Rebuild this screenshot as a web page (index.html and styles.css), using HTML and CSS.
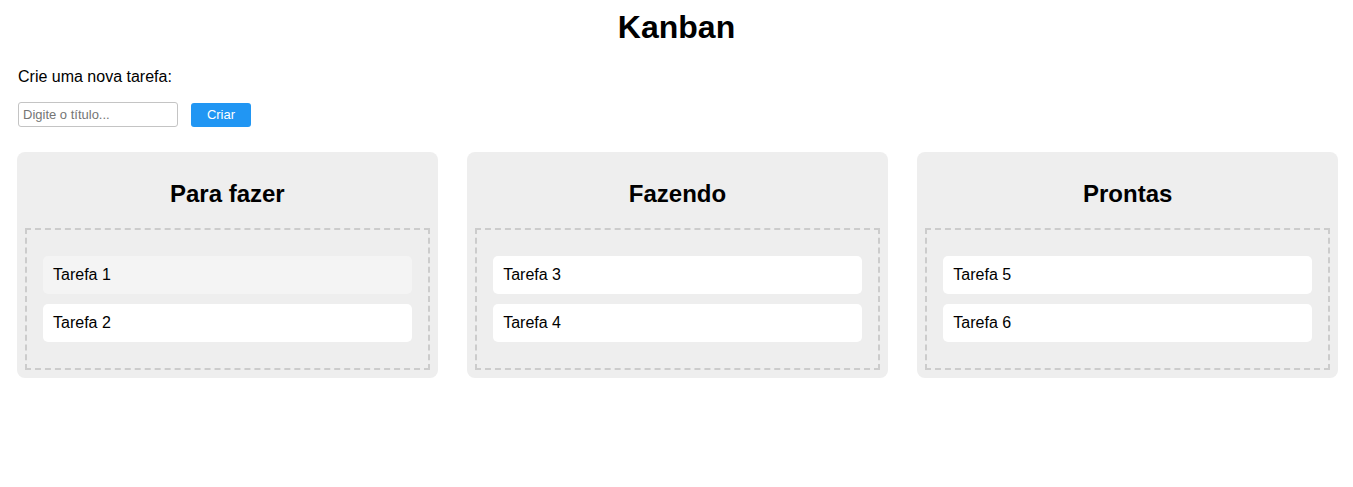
FILE: index.html
```html
<!DOCTYPE html>
<html lang="pt-BR">
<head>
<meta charset="utf-8">
<title>Kanban</title>
<link rel="stylesheet" href="styles.css">
</head>
<body>
<h1 class="title">Kanban</h1>
<p class="label">Crie uma nova tarefa:</p>
<form class="new-task">
  <input class="new-task-input" type="text" placeholder="Digite o título...">
  <button class="new-task-btn" type="button">Criar</button>
</form>
<div class="board">
  <section class="column">
    <h2 class="column-title">Para fazer</h2>
    <div class="dropzone">
      <div class="card card-hover">Tarefa 1</div>
      <div class="card">Tarefa 2</div>
    </div>
  </section>
  <section class="column">
    <h2 class="column-title">Fazendo</h2>
    <div class="dropzone">
      <div class="card">Tarefa 3</div>
      <div class="card">Tarefa 4</div>
    </div>
  </section>
  <section class="column">
    <h2 class="column-title">Prontas</h2>
    <div class="dropzone">
      <div class="card">Tarefa 5</div>
      <div class="card">Tarefa 6</div>
    </div>
  </section>
</div>
</body>
</html>
```

FILE: styles.css
```css
html, body {
  margin: 0;
  padding: 0;
  background: #fff;
}
body {
  font-family: "Liberation Sans", Arial, sans-serif;
  color: #000;
  padding: 9px 18px;
}
.title {
  font-size: 32px;
  font-weight: bold;
  text-align: center;
  margin: 0 0 22px;
  line-height: 37px;
}
.label {
  font-size: 16px;
  line-height: 18px;
  margin: 0 0 16px;
}
.new-task {
  display: flex;
  align-items: center;
  gap: 13px;
  margin: 0 0 25px;
}
.new-task-input {
  width: 160px;
  height: 25px;
  box-sizing: border-box;
  border: 1px solid #c4c4c4;
  border-radius: 3px;
  padding: 0 4px;
  font-family: "Liberation Sans", Arial, sans-serif;
  font-size: 13px;
  margin: 0;
}
.new-task-input::placeholder {
  color: #757575;
}
.new-task-btn {
  width: 60px;
  height: 24px;
  border: none;
  border-radius: 3px;
  background: #2196f3;
  color: #fff;
  font-family: "Liberation Sans", Arial, sans-serif;
  font-size: 13px;
  padding: 0;
}
.board {
  display: grid;
  grid-template-columns: repeat(3, 1fr);
  gap: 29.5px;
  margin: 0 -3px 0 -1px;
}
.column {
  background: #eeeeee;
  border-radius: 8px;
  padding: 8px;
}
.column-title {
  font-size: 24px;
  line-height: 28px;
  font-weight: bold;
  text-align: center;
  margin: 20px 0;
}
.dropzone {
  border: 2px dashed #cccccc;
  padding: 16px;
}
.card {
  background: #fff;
  border-radius: 5px;
  margin: 10px 0;
  padding: 10px;
  font-size: 16px;
  line-height: 18px;
}
.card-hover {
  background: #f4f4f4;
}
```
